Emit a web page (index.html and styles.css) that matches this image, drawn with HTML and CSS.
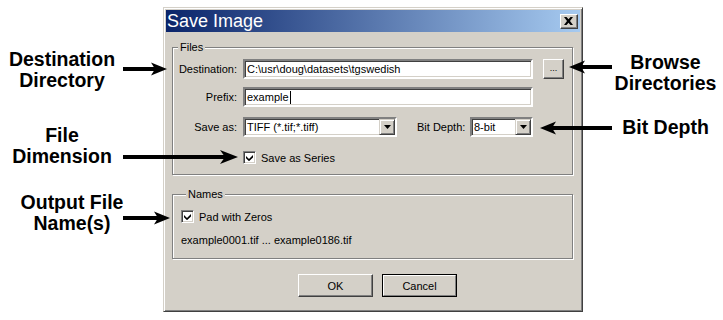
FILE: index.html
```html
<!DOCTYPE html>
<html>
<head>
<meta charset="utf-8">
<link rel="stylesheet" href="styles.css">
</head>
<body>
<div class="page">
  <div class="notes notes-left">
    <div class="note note-dest">Destination<br>Directory</div>
    <div class="note note-dim">File<br>Dimension</div>
    <div class="note note-out">Output File<br>Name(s)</div>
  </div>

  <div class="dialog">
    <div class="titlebar">
      <span class="title">Save Image</span>
      <span class="close"><svg width="9" height="8" viewBox="0 0 9 8"><path d="M0 0h2.5l2 2.3 2-2.3H9L6 4l3 4H6.5l-2-2.3-2 2.3H0l3-4z" fill="#000"/></svg></span>
    </div>
    <div class="content">
      <fieldset class="group files">
        <legend>Files</legend>
        <div class="row row-dest">
          <span class="lbl">Destination:</span>
          <div class="field wide">C:\usr\doug\datasets\tgswedish</div>
          <div class="btn browse">...</div>
        </div>
        <div class="row row-prefix">
          <span class="lbl">Prefix:</span>
          <div class="field wide">example<span class="caret"></span></div>
        </div>
        <div class="row row-save">
          <span class="lbl">Save as:</span>
          <div class="field combo combo-type"><span class="val">TIFF (*.tif;*.tiff)</span><span class="drop"><svg width="7" height="4" viewBox="0 0 7 4"><path d="M0 0h7L3.5 4z" fill="#000"/></svg></span></div>
          <span class="lbl2">Bit Depth:</span>
          <div class="field combo combo-depth"><span class="val">8-bit</span><span class="drop"><svg width="7" height="4" viewBox="0 0 7 4"><path d="M0 0h7L3.5 4z" fill="#000"/></svg></span></div>
        </div>
        <div class="row row-check">
          <span class="check"><svg width="7" height="7" viewBox="0 0 7 7"><path d="M0 2l3 3 4-4v2.5L3 7.2 0 4.2z" fill="#000"/></svg></span>
          <span class="check-text">Save as Series</span>
        </div>
      </fieldset>

      <fieldset class="group names">
        <legend>Names</legend>
        <div class="row row-pad">
          <span class="check"><svg width="7" height="7" viewBox="0 0 7 7"><path d="M0 2l3 3 4-4v2.5L3 7.2 0 4.2z" fill="#000"/></svg></span>
          <span class="check-text">Pad with Zeros</span>
        </div>
        <div class="range">example0001.tif ... example0186.tif</div>
      </fieldset>

      <div class="buttons">
        <div class="btn push">OK</div>
        <div class="btn push default"><span>Cancel</span></div>
      </div>
    </div>
  </div>

  <div class="notes notes-right">
    <div class="note note-browse">Browse<br>Directories</div>
    <div class="note note-depth">Bit Depth</div>
  </div>
</div>

<svg class="arrows" width="723" height="320" viewBox="0 0 723 320">
  <g fill="#000">
    <rect x="123" y="67" width="32" height="4"/>
    <polygon points="167,69 151,62.5 155,69 151,75.5"/>
    <rect x="123" y="155" width="104" height="4"/>
    <polygon points="238,157 220,150 225,157 220,164"/>
    <rect x="123" y="216" width="36" height="4"/>
    <polygon points="170,218 154,211.5 158,218 154,224.5"/>
    <rect x="581" y="65" width="31" height="4"/>
    <polygon points="569,67 585,60.5 581,67 585,73.5"/>
    <rect x="552" y="126" width="60" height="4"/>
    <polygon points="540,128 556,121.5 552,128 556,134.5"/>
  </g>
</svg>
</body>
</html>
```

FILE: styles.css
```css
* { box-sizing: border-box; }
html, body { margin: 0; padding: 0; background: #fff; }
body {
  width: 723px;
  height: 320px;
  overflow: hidden;
  position: relative;
  font-family: "Liberation Sans", Arial, sans-serif;
  color: #000;
}

.page { display: flex; padding-top: 7px; }

/* annotations */
.notes { flex: none; display: flex; flex-direction: column; }
.notes-left { width: 163px; }
.notes-right { width: 140px; padding-left: 27px; }
.note {
  font-weight: bold;
  font-size: 19.5px;
  line-height: 21px;
  text-align: center;
  width: 111px;
}
.note-dest { margin-top: 42px; width: 124px; }
.note-dim { margin-top: 34px; width: 124px; }
.note-out { margin-top: 25px; width: 124px; margin-left: 10px; }
.note-browse { margin-top: 45px; }
.note-depth { margin-top: 23px; }

.arrows { position: absolute; left: 0; top: 0; pointer-events: none; }

/* dialog */
.dialog {
  flex: none;
  width: 420px;
  height: 305px;
  background: #d4d0c8;
  border: 1px solid;
  border-color: #d4d0c8 #404040 #404040 #d4d0c8;
  box-shadow: inset 1px 1px 0 #fff, inset -1px -1px 0 #808080;
  padding: 2px;
  display: flex;
  flex-direction: column;
  font-size: 11px;
}
.titlebar {
  height: 22px;
  flex: none;
  background: linear-gradient(to right, #0a246a, #a6caf0);
  display: flex;
  align-items: center;
  justify-content: space-between;
  padding: 0 2px 0 1px;
}
.title { color: #fff; font-size: 18px; line-height: 22px; }
.close {
  width: 18px;
  height: 15px;
  background: #d4d0c8;
  border: 1px solid;
  border-color: #fff #404040 #404040 #fff;
  box-shadow: inset -1px -1px 0 #808080;
  display: flex;
  align-items: center;
  justify-content: center;
  padding-right: 1px;
}

.content { padding: 0 6px; display: flex; flex-direction: column; }

.group {
  margin: 0;
  padding: 0;
  border: 1px solid #808080;
  box-shadow: inset 1px 1px 0 #fff, 1px 1px 0 #fff;
  min-width: 0;
}
.group legend {
  margin-left: 5px;
  padding: 0 2px;
  line-height: 13px;
  font-size: 11px;
  background: #d4d0c8;
}
.files { margin-top: 9px; padding: 5px 0 10px 0; width: 401px; }
.names { margin-top: 13px; padding: 9px 0 11px 8px; width: 401px; }

.row { display: flex; align-items: center; }
.row-dest { height: 20px; }
.row-prefix { height: 20px; margin-top: 8px; }
.row-save { height: 20px; margin-top: 10px; }
.row-check { height: 13px; margin-top: 14px; padding-left: 70px; }

.lbl { width: 64px; text-align: right; margin-right: 6px; flex: none; }
.lbl2 { width: 53px; margin-left: 20px; flex: none; }

.field {
  height: 20px;
  background: #fff;
  border: 2px solid;
  border-color: #808080 #fff #fff #808080;
  box-shadow: inset 1px 1px 0 #404040, inset -1px -1px 0 #d4d0c8;
  padding: 0 0 0 2px;
  line-height: 16px;
  white-space: nowrap;
  display: flex;
  align-items: center;
}
.wide { width: 290px; }
.caret { display: inline-block; width: 1px; height: 13px; background: #000; margin-left: 1px; }

.combo { padding-right: 0; justify-content: space-between; }
.combo-type { width: 154px; }
.combo-depth { width: 63px; }
.drop {
  width: 16px;
  height: 16px;
  flex: none;
  background: #d4d0c8;
  border: 1px solid;
  border-color: #d4d0c8 #404040 #404040 #d4d0c8;
  box-shadow: inset 1px 1px 0 #fff, inset -1px -1px 0 #808080;
  display: flex;
  align-items: center;
  justify-content: center;
}

.btn {
  background: #d4d0c8;
  border: 1px solid;
  border-color: #fff #404040 #404040 #fff;
  box-shadow: inset -1px -1px 0 #808080;
  display: flex;
  align-items: center;
  justify-content: center;
}
.browse { width: 21px; height: 20px; margin-left: 10px; font-size: 9px; padding-bottom: 2px; }

.check {
  width: 13px;
  height: 13px;
  flex: none;
  background: #fff;
  border: 1px solid;
  border-color: #808080 #fff #fff #808080;
  box-shadow: inset 1px 1px 0 #404040, inset -1px -1px 0 #d4d0c8;
  display: flex;
  align-items: center;
  justify-content: center;
}
.row-check .check-text { margin-left: 5px; }
.row-pad { height: 13px; }
.row-pad .check-text { margin-left: 5px; }
.range { margin-top: 11px; line-height: 13px; }

.buttons { display: flex; gap: 9px; margin-top: 15px; padding-left: 126px; }
.push { width: 75px; height: 23px; }
.push.default { border-color: #000; box-shadow: none; padding: 0; }
.push.default span {
  width: 100%;
  height: 100%;
  display: flex;
  align-items: center;
  justify-content: center;
  border: 1px solid;
  border-color: #fff #808080 #808080 #fff;
}
```
